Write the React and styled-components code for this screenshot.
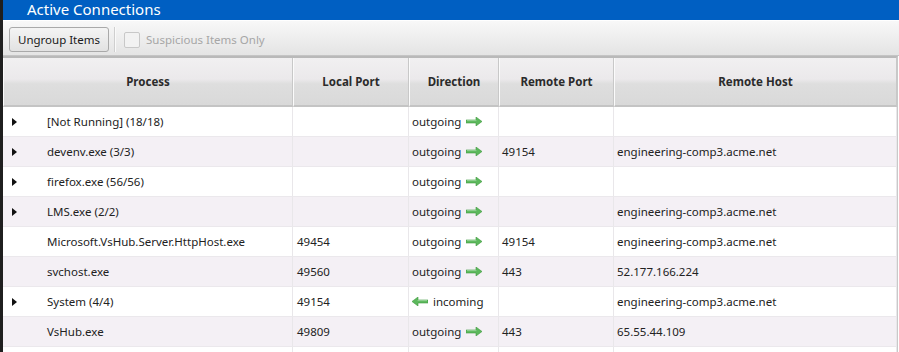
import React from "react";
import styled, { createGlobalStyle } from "styled-components";

const rows = [
  { process: "[Not Running] (18/18)", group: true, local: "", dir: "out", rport: "", host: "" },
  { process: "devenv.exe (3/3)", group: true, local: "", dir: "out", rport: "49154", host: "engineering-comp3.acme.net" },
  { process: "firefox.exe (56/56)", group: true, local: "", dir: "out", rport: "", host: "" },
  { process: "LMS.exe (2/2)", group: true, local: "", dir: "out", rport: "", host: "engineering-comp3.acme.net" },
  { process: "Microsoft.VsHub.Server.HttpHost.exe", group: false, local: "49454", dir: "out", rport: "49154", host: "engineering-comp3.acme.net" },
  { process: "svchost.exe", group: false, local: "49560", dir: "out", rport: "443", host: "52.177.166.224" },
  { process: "System (4/4)", group: true, local: "49154", dir: "in", rport: "", host: "engineering-comp3.acme.net" },
  { process: "VsHub.exe", group: false, local: "49809", dir: "out", rport: "443", host: "65.55.44.109" },
  { process: "", group: false, local: "", dir: "", rport: "", host: "" },
];

const columns = ["Process", "Local Port", "Direction", "Remote Port", "Remote Host"];

const GlobalStyle = createGlobalStyle`
  html, body {
    margin: 0;
    padding: 0;
    overflow: hidden;
    background: #ffffff;
  }
  body {
    font-family: "Noto Sans", "Open Sans", sans-serif;
  }
`;

const Window = styled.div`
  width: 899px;
  height: 352px;
  display: flex;
  flex-direction: column;
  border-left: 3px solid #1f1f1f;
  box-sizing: border-box;
  background: #ffffff;
  overflow: hidden;
`;

const TitleBar = styled.div`
  height: 21px;
  flex: none;
  box-sizing: border-box;
  background: #005fc2;
  color: #ffffff;
  font-size: 15px;
  line-height: 19px;
  padding-left: 24px;
  border-bottom: 1px solid #ffffff;
`;

const Toolbar = styled.div`
  height: 34px;
  flex: none;
  display: flex;
  align-items: center;
  padding: 0 6px;
  background: linear-gradient(#f8f8f8, #ececec 60%, #e4e4e4);
  border-bottom: 1px solid #c4c4c4;
`;

const Button = styled.button`
  height: 25px;
  width: 100px;
  margin-top: 3px;
  font-family: inherit;
  font-size: 11.5px;
  color: #1a1a1a;
  background: linear-gradient(#f4f4f4, #e2e2e2);
  border: 1px solid #a9a9a9;
  border-radius: 3px;
  padding: 0;
`;

const Separator = styled.div`
  width: 1px;
  height: 25px;
  margin: 3px 8px 0 5px;
  background: #cfcfcf;
  border-right: 1px solid #fafafa;
`;

const CheckLabel = styled.label`
  display: flex;
  align-items: center;
  gap: 6px;
  margin-top: 3px;
  font-size: 11.5px;
  color: #a6a6a6;
`;

const CheckBox = styled.span`
  width: 14px;
  height: 14px;
  border: 1px solid #c8c8c8;
  background: #f2f2f2;
  border-radius: 2px;
`;

const Table = styled.div`
  flex: 1;
  display: grid;
  grid-template-columns: 290px 116px 90px 115px 283px;
  grid-template-rows: 49px;
  grid-auto-rows: 30px;
  align-content: start;
  border-top: 2px solid #b9b9b9;
  border-right: 2px solid #c9c9c9;
  margin-right: 1px;
  font-size: 11.5px;
  color: #222222;
`;

const HeadCell = styled.div`
  display: flex;
  align-items: center;
  justify-content: center;
  font-weight: 700;
  font-size: 11.5px;
  color: #2b2b2b;
  background: linear-gradient(#f1f0f1, #ebe9eb 45%, #dedede 55%, #d9d9d9);
  border-right: 1px solid #c8c8c8;
  border-left: 1px solid #fbfbfb;
  border-bottom: 2px solid #c4c4c4;
  box-sizing: border-box;
`;

const Contents = styled.div`
  display: contents;
`;

const Cell = styled.div`
  display: flex;
  align-items: center;
  gap: ${(p) => p.$gap ?? 5}px;
  padding-left: ${(p) => p.$pad ?? 4}px;
  background: ${(p) => (p.$alt ? "#f4f0f5" : "#ffffff")};
  border-right: 1px solid #e9e7ea;
  border-bottom: 1px solid #ebe8ec;
  box-sizing: border-box;
  white-space: nowrap;
  overflow: hidden;
`;

const Expander = styled.span`
  flex: none;
  width: 35px;
  padding-left: 9px;
  box-sizing: content-box;
  display: flex;
  align-items: center;

  &::before {
    content: "";
    display: ${(p) => (p.$show ? "block" : "none")};
    width: 0;
    height: 0;
    border-top: 4px solid transparent;
    border-bottom: 4px solid transparent;
    border-left: 5px solid #111111;
  }
`;

const ArrowSvg = styled.svg`
  flex: none;
  transform: ${(p) => (p.$left ? "scaleX(-1)" : "none")};
`;

const Arrow = ({ left }) => (
  <ArrowSvg $left={left} width="16" height="9" viewBox="0 0 16 9">
    <path d="M0 3h10V0l6 4.5L10 9V6H0z" fill="#5cb85c" stroke="#3f9a3f" strokeWidth="0.6" />
    <path d="M1 3.6h9.4" stroke="#a5dba5" strokeWidth="0.8" />
  </ArrowSvg>
);

const Direction = ({ dir }) => {
  if (dir === "out")
    return (
      <>
        outgoing <Arrow />
      </>
    );
  if (dir === "in")
    return (
      <>
        <Arrow left /> incoming
      </>
    );
  return null;
};

export default function App() {
  return (
    <>
      <GlobalStyle />
      <Window>
        <TitleBar>Active Connections</TitleBar>
        <Toolbar>
          <Button>Ungroup Items</Button>
          <Separator />
          <CheckLabel>
            <CheckBox />
            Suspicious Items Only
          </CheckLabel>
        </Toolbar>
        <Table>
          <Contents>
            {columns.map((c) => (
              <HeadCell key={c}>{c}</HeadCell>
            ))}
          </Contents>
          {rows.map((r, i) => {
            const alt = i % 2 === 1;
            return (
              <Contents key={i}>
                <Cell $alt={alt} $pad={0} $gap={0}>
                  <Expander $show={r.group} />
                  {r.process}
                </Cell>
                <Cell $alt={alt}>{r.local}</Cell>
                <Cell $alt={alt} $pad={3}>
                  <Direction dir={r.dir} />
                </Cell>
                <Cell $alt={alt} $pad={3}>{r.rport}</Cell>
                <Cell $alt={alt} $pad={3}>{r.host}</Cell>
              </Contents>
            );
          })}
        </Table>
      </Window>
    </>
  );
}
